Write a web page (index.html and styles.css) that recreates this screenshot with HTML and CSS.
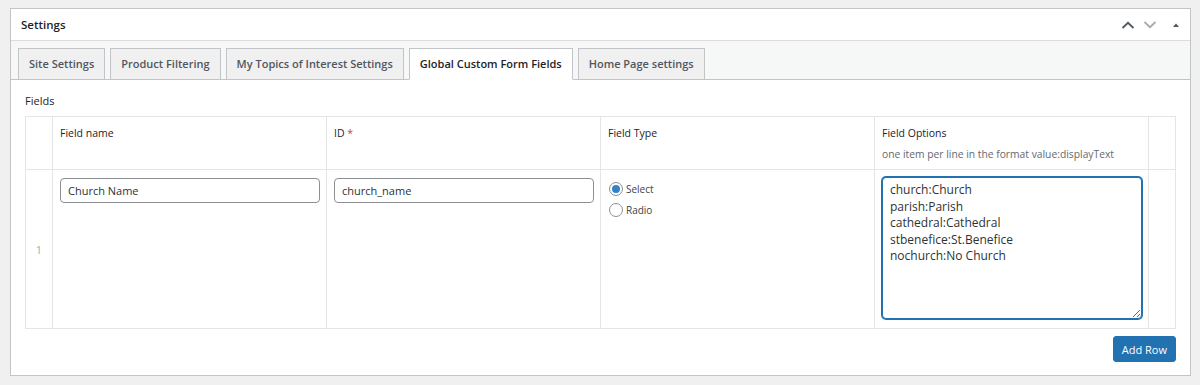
FILE: index.html
```html
<!DOCTYPE html>
<html lang="en">
<head>
    <meta charset="UTF-8">
    <title>Settings</title>
    <link rel="stylesheet" href="styles.css">
</head>
<body>
    <div class="postbox">
        <div class="postbox-header">
            <h2 class="postbox-title">Settings</h2>
            <div class="handle-actions">
                <svg class="handle up" width="14" height="10" viewBox="0 0 14 10"><path d="M1.5 8 L7 2.8 L12.5 8" fill="none" stroke="currentColor" stroke-width="1.8"/></svg>
                <svg class="handle down" width="14" height="10" viewBox="0 0 14 10"><path d="M1.5 2 L7 7.2 L12.5 2" fill="none" stroke="currentColor" stroke-width="1.8"/></svg>
                <svg class="handle toggle" width="10" height="10" viewBox="0 0 10 10"><path d="M2 7 L5 3.5 L8 7 Z" fill="currentColor"/></svg>
            </div>
        </div>

        <div class="tab-wrapper">
            <a class="tab" href="#">Site Settings</a>
            <a class="tab" href="#">Product Filtering</a>
            <a class="tab" href="#">My Topics of Interest Settings</a>
            <a class="tab active" href="#">Global Custom Form Fields</a>
            <a class="tab" href="#">Home Page settings</a>
        </div>

        <div class="tab-content">
            <p class="section-label">Fields</p>

            <table class="fields-table">
                <thead>
                    <tr>
                        <th class="col-num"></th>
                        <th>Field name</th>
                        <th>ID <span class="required">*</span></th>
                        <th>Field Type</th>
                        <th>Field Options<span class="description">one item per line in the format value:displayText</span></th>
                        <th class="col-end"></th>
                    </tr>
                </thead>
                <tbody>
                    <tr>
                        <td class="col-num row-index">1</td>
                        <td><input type="text" value="Church Name"></td>
                        <td><input type="text" value="church_name"></td>
                        <td>
                            <label class="radio"><input type="radio" name="type" checked> Select</label>
                            <label class="radio"><input type="radio" name="type"> Radio</label>
                        </td>
                        <td><textarea>church:Church
parish:Parish
cathedral:Cathedral
stbenefice:St.Benefice
nochurch:No Church</textarea></td>
                        <td class="col-end"></td>
                    </tr>
                </tbody>
            </table>

            <div class="table-actions">
                <button type="button" class="button-primary">Add Row</button>
            </div>
        </div>
    </div>
</body>
</html>
```

FILE: styles.css
```css
* {
    margin: 0;
    padding: 0;
    box-sizing: border-box;
    font-family: 'Open Sans', 'Noto Sans', sans-serif;
}

body {
    background-color: #f0f0f1;
    padding: 8px 9px 0 10px;
    color: #1d2327;
    font-size: 12px;
}

.postbox {
    background: white;
    border: 1px solid #c3c4c7;
}

.postbox-header {
    display: flex;
    align-items: center;
    justify-content: space-between;
    height: 32px;
    padding: 0 10px;
    border-bottom: 1px solid #dcdcde;
}

.postbox-title {
    font-size: 11.5px;
    font-weight: 600;
}

.handle-actions {
    display: flex;
    align-items: center;
    gap: 8px;
    margin-right: -1px;
}

.handle {
    color: #50575e;
}

.handle.down {
    color: #a7aaad;
}

.handle.toggle {
    margin-left: 6px;
    color: #50575e;
}

.tab-wrapper {
    display: flex;
    gap: 5px;
    padding: 7px 7px 0;
    background-color: #f6f7f7;
    border-bottom: 1px solid #c3c4c7;
}

.tab {
    display: block;
    height: 32px;
    line-height: 30px;
    padding: 0 10px;
    margin-bottom: -1px;
    border: 1px solid #c3c4c7;
    background-color: #f0f0f1;
    color: #50575e;
    font-size: 11px;
    font-weight: 600;
    text-decoration: none;
}

.tab.active {
    background-color: white;
    color: #1d2327;
    border-bottom-color: white;
}

.tab-content {
    padding: 13px 14px 13px;
}

.section-label {
    font-size: 11px;
    line-height: 16px;
    margin-bottom: 7px;
}

.fields-table {
    width: 100%;
    border-collapse: collapse;
    border: 1px solid #dcdcde;
    table-layout: fixed;
}

.fields-table th,
.fields-table td {
    border: 1px solid #e5e5e5;
    text-align: left;
    vertical-align: top;
}

.fields-table th {
    font-weight: 400;
    font-size: 10.5px;
    line-height: 21px;
    padding: 6px 7px 4px;
    height: 53px;
    color: #1d2327;
}

.col-num,
.col-end {
    width: 27px;
}

.required {
    color: #d63638;
}

.description {
    display: block;
    font-size: 10.3px;
    color: #646970;
}

.fields-table td {
    padding: 8px 6px 9px 7px;
    height: 159px;
}

.fields-table td.row-index {
    vertical-align: middle;
    text-align: center;
    color: #a7aaad;
    font-size: 11px;
    padding: 0;
}

input[type="text"] {
    display: block;
    width: 100%;
    height: 25px;
    padding: 0 7px;
    border: 1px solid #8c8f94;
    border-radius: 4px;
    font-size: 11px;
    color: #2c3338;
}

.radio {
    display: flex;
    align-items: center;
    gap: 3px;
    height: 20px;
    margin-top: 1px;
    margin-left: 1px;
    font-size: 10px;
    color: #3c434a;
}

.radio input {
    appearance: none;
    width: 14px;
    height: 14px;
    border: 1px solid #8c8f94;
    border-radius: 50%;
    display: grid;
    place-items: center;
    background: white;
}

.radio input:checked::before {
    content: "";
    width: 8px;
    height: 8px;
    border-radius: 50%;
    background-color: #3582c4;
}

textarea {
    display: block;
    width: 100%;
    height: 142px;
    padding: 4px 7px;
    border: 1px solid #2271b1;
    box-shadow: 0 0 0 1px #2271b1;
    border-radius: 4px;
    font-size: 12px;
    line-height: 16.5px;
    color: #2c3338;
    resize: vertical;
    outline: none;
    margin-top: -1px;
}

.table-actions {
    display: flex;
    justify-content: flex-end;
    margin-top: 7px;
}

.button-primary {
    background-color: #2271b1;
    color: white;
    border: 1px solid #2271b1;
    border-radius: 3px;
    height: 26px;
    padding: 0 8px;
    font-size: 11px;
    cursor: pointer;
}
```
